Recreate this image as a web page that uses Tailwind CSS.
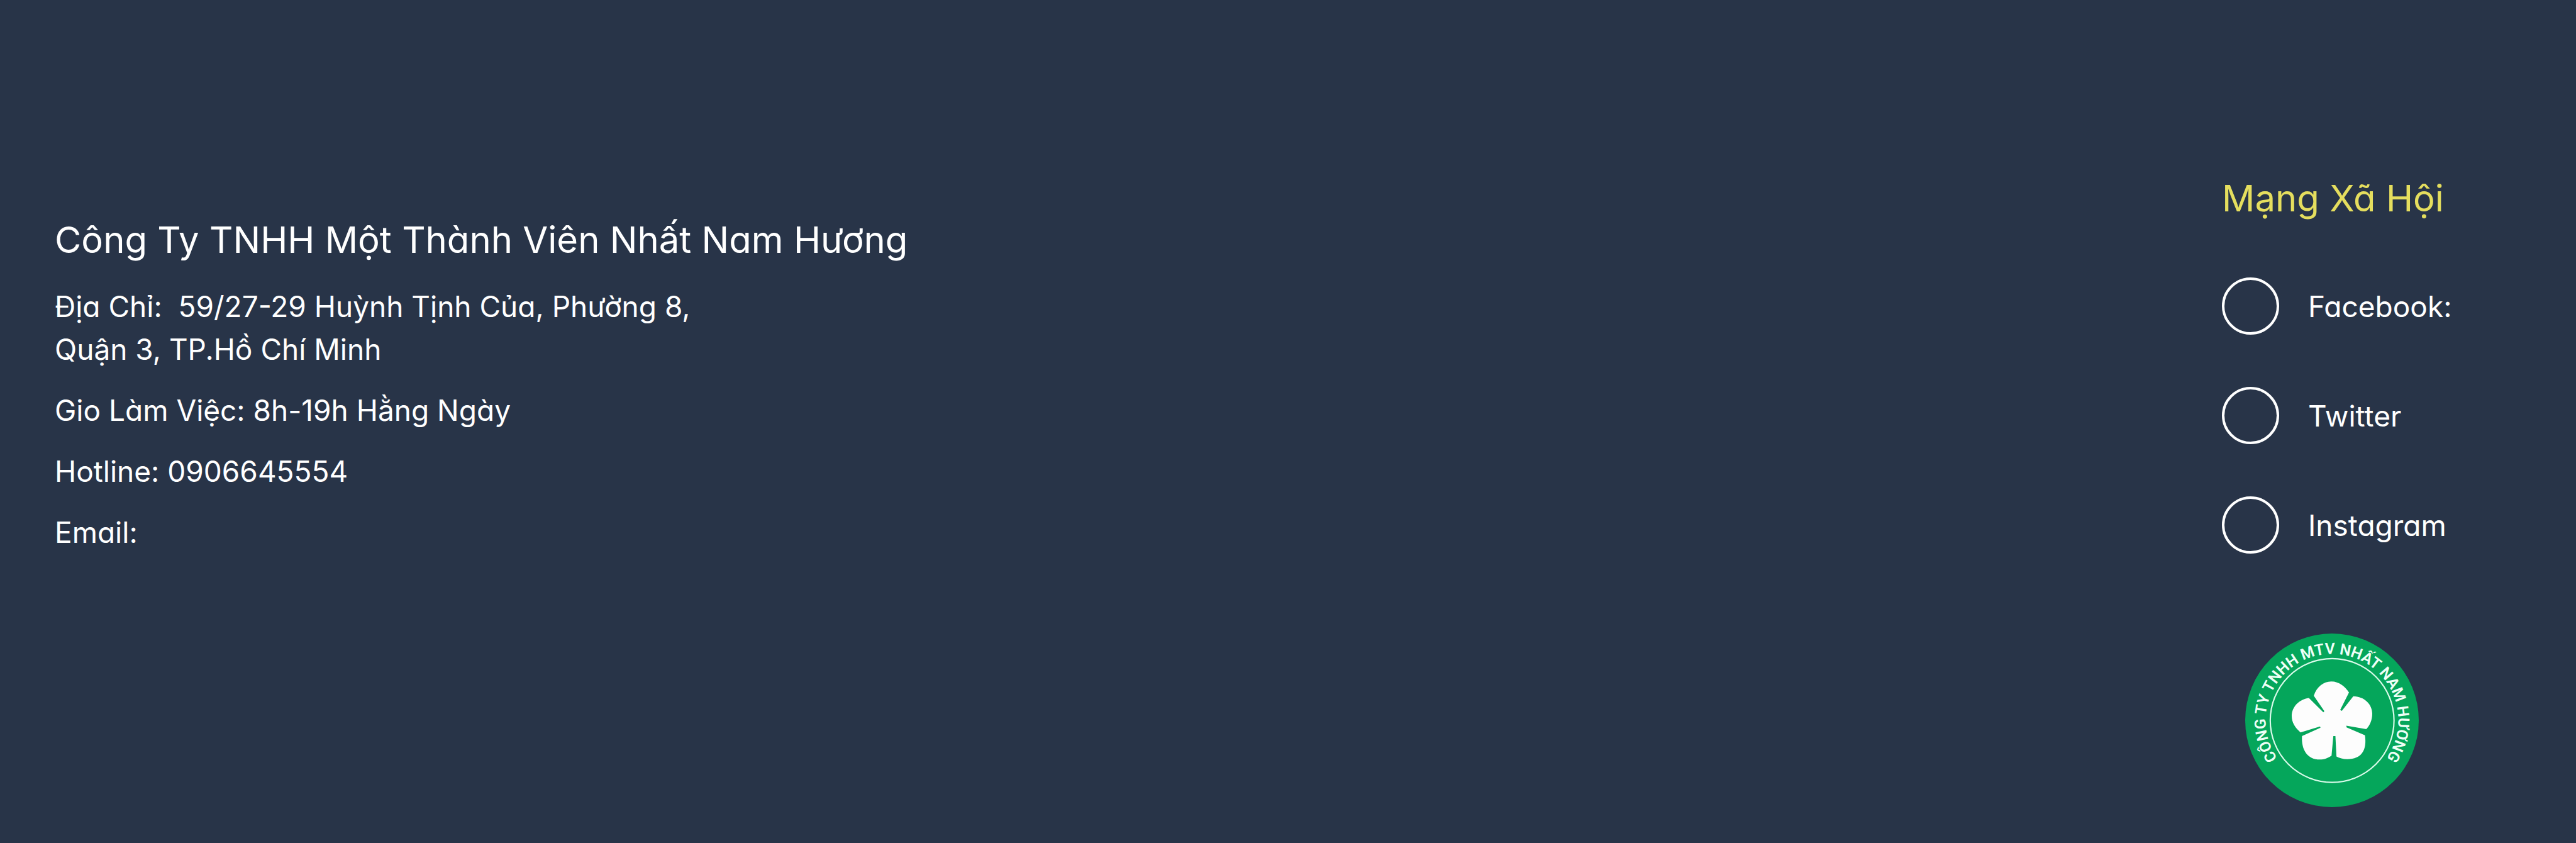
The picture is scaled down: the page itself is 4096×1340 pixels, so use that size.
<!DOCTYPE html>
<html lang="vi">
<head>
<meta charset="utf-8">
<meta name="viewport" content="width=device-width, initial-scale=1">
<title>Nhất Nam Hương</title>
<script src="https://cdn.jsdelivr.net/npm/@tailwindcss/browser@4"></script>
</head>
<body class="bg-[#283448]">
<footer class="flex min-h-screen items-start justify-between bg-[#283448] pl-[87px] pr-48 font-['Inter','Noto_Sans',sans-serif] text-[46px] leading-[68px] text-white [font-feature-settings:'cv11']">
  <section class="flex flex-col gap-[29px] pt-[341px]">
    <h2 class="mb-[3px] text-[58px] leading-[80px]">Công Ty TNHH Một Thành Viên Nh<span class="[font-feature-settings:normal]">ấ</span>t Nam Hương</h2>
    <address class="not-italic">Địa Chỉ:&nbsp; 59/27-29 Huỳnh Tịnh Của, Phường 8,<br>Qu<span class="[font-feature-settings:normal]">ậ</span>n 3, TP.Hồ Chí Minh</address>
    <p>Gio Làm Việc: 8h-19h H<span class="[font-feature-settings:normal]">ằ</span>ng Ngày</p>
    <p>Hotline: 0906645554</p>
    <p>Email:</p>
  </section>
  <section class="w-[371px] pt-[275px]">
    <h2 class="text-[58px] leading-[80px] whitespace-nowrap text-[#e5de5e]">M<span class="[font-feature-settings:normal]">ạ</span>ng Xã Hội</h2>
    <ul class="mt-[86px] flex flex-col gap-[83px]">
      <li><a href="#" class="flex items-center gap-[46px]"><span class="size-[91px] shrink-0 rounded-full border-4 border-white"></span>Facebook:</a></li>
      <li><a href="#" class="flex items-center gap-[46px]"><span class="size-[91px] shrink-0 rounded-full border-4 border-white"></span>Twitter</a></li>
      <li><a href="#" class="flex items-center gap-[46px]"><span class="size-[91px] shrink-0 rounded-full border-4 border-white"></span>Instagram</a></li>
    </ul>
    <svg class="mt-[127px] ml-[37px] size-[276px]" viewBox="120 78 1164 1164" role="img" aria-label="Công Ty TNHH MTV Nhất Nam Hương">
      <circle cx="702" cy="660" r="582" fill="#05a65b"/>
      <circle cx="703" cy="661" r="415" fill="none" stroke="#d9fbea" stroke-width="9"/>
      <path id="ring" d="M702 1105A445 445 0 0 1 702 215A445 445 0 0 1 702 1105" fill="none"/>
      <text class="font-['Roboto',sans-serif] font-semibold" font-size="104" fill="#effff7" text-anchor="middle"><textPath href="#ring" startOffset="50%">CÔNG TY TNHH MTV NHẤT NAM HƯƠNG</textPath></text>
      <path fill="#fdfdfd" d="M580 495C600 435 645 400 697 400C750 400 790 435 816 473L757 590L768 597L845 499C920 500 972 555 972 615C972 660 955 695 932 719L798 696L800 707L923 760C938 860 900 920 805 920C775 920 752 912 732 902L725 765H711L699 897C675 913 650 923 620 923C540 923 495 860 501 765L625 710L622 701L491 741C455 710 432 675 432 632C432 570 480 520 547 510L644 606L651 599Z"/>
    </svg>
  </section>
</footer>
</body>
</html>
